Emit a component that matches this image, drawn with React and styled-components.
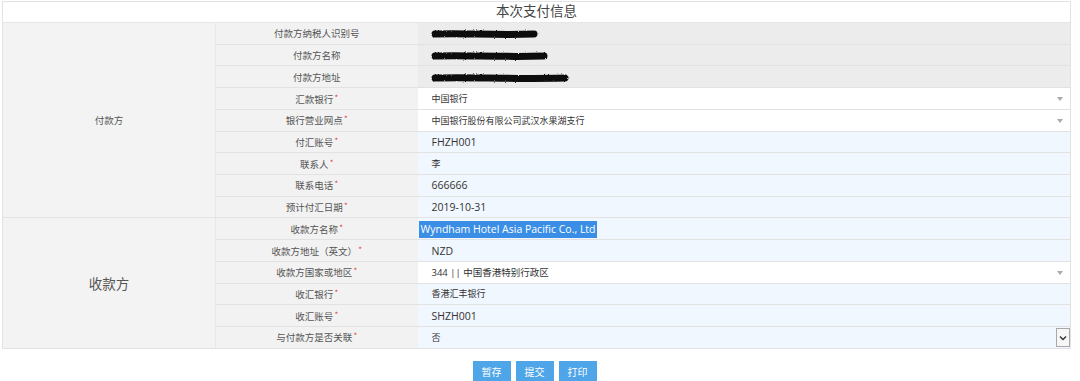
import React from 'react'
import styled, { createGlobalStyle } from 'styled-components'

const GlobalStyle = createGlobalStyle`
  body {
    margin: 0;
    background: #fff;
    font-family: "Noto Sans CJK SC", "Noto Sans", sans-serif;
    color: #333;
  }
`

const Page = styled.div`
  width: 1080px;
  height: 381px;
  overflow: hidden;
  padding: 1px 9px 0 2px;
  box-sizing: border-box;
`

const Table = styled.table`
  width: 100%;
  border-collapse: collapse;
  table-layout: fixed;
  border: 1px solid #e3e3e3;
`

const TitleCell = styled.td`
  height: 17px;
  padding: 0 0 3px;
  text-align: center;
  font-size: 13.5px;
  line-height: 17px;
  color: #444;
  background: #fff;
  border-bottom: 1px solid #e6e6e6;
`

const GroupCell = styled.td`
  background: #f3f3f3;
  text-align: center;
  font-size: ${p => (p.$big ? '13.5px' : '9.5px')};
  color: #555;
  border-bottom: 1px solid #e3e3e3;
  border-right: 1px solid #e8e8e8;
  padding: 0;
`

const Row = styled.tr`
  height: 21.73px;
`

const LabelCell = styled.td`
  background: #f2f2f2;
  text-align: center;
  font-size: 9.5px;
  color: #555;
  padding: 0;
  border-bottom: 1px solid #e2e2e2;
  white-space: nowrap;
`

const Star = styled.span`
  color: #e03a3a;
  font-size: 8px;
  vertical-align: top;
  margin-left: 1px;
`

const ValueCell = styled.td`
  position: relative;
  padding: 0 0 0 14px;
  font-size: ${p => p.$size}px;
  color: #333;
  border-bottom: 1px solid #e2e2e2;
  white-space: nowrap;
  background: ${p =>
    p.$kind === 'gray' ? '#ececec' : p.$kind === 'white' ? '#ffffff' : '#f1f7fe'};
  font-family: ${p => (p.$latin ? '"Open Sans", "Noto Sans CJK SC", sans-serif' : 'inherit')};
`

const Selected = styled.span`
  background: #3a8ee6;
  color: #fff;
  padding: 1px 1px 2px 2px;
  margin-left: -13px;
`

const Caret = styled.span`
  position: absolute;
  right: 7px;
  top: 9px;
  width: 0;
  height: 0;
  border-left: 3.5px solid transparent;
  border-right: 3.5px solid transparent;
  border-top: 4px solid #aaa;
`

const NativeArrow = styled.span`
  position: absolute;
  right: 0;
  top: 1px;
  width: 14px;
  height: 19px;
  border: 1px solid #a8a8a8;
  box-sizing: border-box;
  background: #f6f6f6;
  display: flex;
  align-items: center;
  justify-content: center;
`

const Buttons = styled.div`
  display: flex;
  justify-content: center;
  gap: 5px;
  margin-top: 12px;
  padding-right: 4px;
`

const Button = styled.button`
  width: 38px;
  height: 21px;
  border: none;
  background: #4ea5e8;
  color: #fff;
  font-size: 10px;
  font-family: "Noto Sans CJK SC", sans-serif;
  padding: 0;
`

const Scribble = ({ w, id }) => (
  <svg width={w + 10} height="12" style={{ verticalAlign: 'middle', marginLeft: -2 }}>
    <filter id={id} filterUnits="userSpaceOnUse" x="0" y="0" width={w + 10} height="12">
      <feTurbulence type="fractalNoise" baseFrequency="0.9" numOctaves="2" result="n" />
      <feDisplacementMap in="SourceGraphic" in2="n" scale="2.5" />
    </filter>
    <path
      d={`M5 6 C ${w * 0.3} 4.5, ${w * 0.6} 7.5, ${w + 4} 6`}
      stroke="#111"
      strokeWidth="7"
      strokeLinecap="round"
      fill="none"
      filter={`url(#${id})`}
    />
  </svg>
)

const rows = [
  { label: '付款方纳税人识别号', kind: 'gray', scribble: 100 },
  { label: '付款方名称', kind: 'gray', scribble: 110 },
  { label: '付款方地址', kind: 'gray', scribble: 131 },
  { label: '汇款银行', req: true, kind: 'white', value: '中国银行', select: true },
  { label: '银行营业网点', req: true, kind: 'white', value: '中国银行股份有限公司武汉水果湖支行', select: true },
  { label: '付汇账号', req: true, value: 'FHZH001', latin: true },
  { label: '联系人', req: true, value: '李' },
  { label: '联系电话', req: true, value: '666666', latin: true },
  { label: '预计付汇日期', req: true, value: '2019-10-31', latin: true },
  { label: '收款方名称', req: true, value: 'Wyndham Hotel Asia Pacific Co., Ltd', latin: true, selected: true },
  { label: '收款方地址（英文）', req: true, value: 'NZD', latin: true },
  { label: '收款方国家或地区', req: true, kind: 'white', value: '344 || 中国香港特别行政区', select: true, latin: true, size: 9.5 },
  { label: '收汇银行', req: true, value: '香港汇丰银行' },
  { label: '收汇账号', req: true, value: 'SHZH001', latin: true },
  { label: '与付款方是否关联', req: true, value: '否', native: true },
]

const App = () => (
  <Page>
    <GlobalStyle />
    <Table>
      <colgroup>
        <col style={{ width: 213 }} />
        <col style={{ width: 202 }} />
        <col />
      </colgroup>
      <tbody>
        <tr>
          <TitleCell colSpan={3}>本次支付信息</TitleCell>
        </tr>
        {rows.map((r, i) => (
          <Row key={i}>
            {i === 0 && <GroupCell rowSpan={9}>付款方</GroupCell>}
            {i === 9 && <GroupCell rowSpan={6} $big>收款方</GroupCell>}
            <LabelCell>
              {r.label}
              {r.req && <Star>*</Star>}
            </LabelCell>
            <ValueCell $kind={r.kind} $latin={r.latin} $size={r.size || (r.latin ? 10.5 : 9)}>
              {r.scribble && <Scribble w={r.scribble} id={`rough${i}`} />}
              {r.selected ? <Selected>{r.value}</Selected> : r.value}
              {r.select && <Caret />}
              {r.native && (
                <NativeArrow>
                  <svg width="8" height="6" viewBox="0 0 8 6">
                    <path d="M1 1.5 L4 4.5 L7 1.5" stroke="#333" strokeWidth="1.4" fill="none" />
                  </svg>
                </NativeArrow>
              )}
            </ValueCell>
          </Row>
        ))}
      </tbody>
    </Table>
    <Buttons>
      <Button>暂存</Button>
      <Button>提交</Button>
      <Button>打印</Button>
    </Buttons>
  </Page>
)

export default App
